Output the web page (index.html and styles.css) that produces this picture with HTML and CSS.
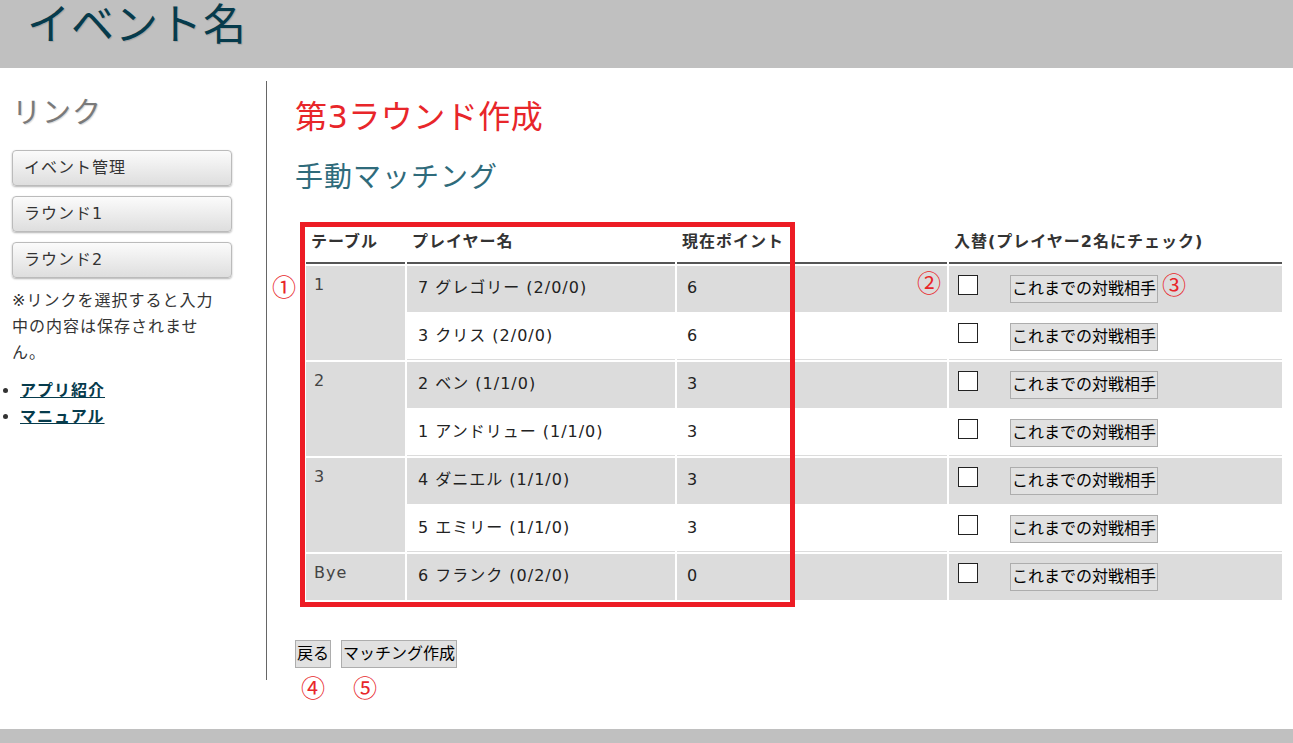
FILE: index.html
```html
<!DOCTYPE html>
<html lang="ja">
<head>
  <meta charset="UTF-8">
  <title>第3ラウンド作成</title>
  <link rel="stylesheet" href="styles.css">
</head>
<body>

  <header class="site-header">
    <h1>イベント名</h1>
  </header>

  <div class="layout">
    <aside class="sidebar">
      <h2>リンク</h2>
      <a class="nav-btn" href="#">イベント管理</a>
      <a class="nav-btn" href="#">ラウンド1</a>
      <a class="nav-btn" href="#">ラウンド2</a>
      <p class="note">※リンクを選択すると入力中の内容は保存されません。</p>
      <ul class="links">
        <li><a href="#">アプリ紹介</a></li>
        <li><a href="#">マニュアル</a></li>
      </ul>
    </aside>

    <main class="main">
      <h2 class="round-title">第3ラウンド作成</h2>
      <h3 class="sub-title">手動マッチング</h3>

      <table class="matching">
        <colgroup>
          <col class="c-table">
          <col class="c-player">
          <col class="c-point">
          <col class="c-swap">
        </colgroup>
        <thead>
          <tr>
            <th>テーブル</th>
            <th>プレイヤー名</th>
            <th>現在ポイント</th>
            <th>入替(プレイヤー2名にチェック)</th>
          </tr>
        </thead>
        <tbody>
          <tr class="odd">
            <td class="tbl" rowspan="2">1</td>
            <td class="player">7 グレゴリー (2/0/0)</td>
            <td>6</td>
            <td class="swap"><div class="swap-box"><input type="checkbox"><button>これまでの対戦相手</button></div></td>
          </tr>
          <tr>
            <td class="player">3 クリス (2/0/0)</td>
            <td>6</td>
            <td class="swap"><div class="swap-box"><input type="checkbox"><button>これまでの対戦相手</button></div></td>
          </tr>
          <tr class="odd">
            <td class="tbl" rowspan="2">2</td>
            <td class="player">2 ベン (1/1/0)</td>
            <td>3</td>
            <td class="swap"><div class="swap-box"><input type="checkbox"><button>これまでの対戦相手</button></div></td>
          </tr>
          <tr>
            <td class="player">1 アンドリュー (1/1/0)</td>
            <td>3</td>
            <td class="swap"><div class="swap-box"><input type="checkbox"><button>これまでの対戦相手</button></div></td>
          </tr>
          <tr class="odd">
            <td class="tbl" rowspan="2">3</td>
            <td class="player">4 ダニエル (1/1/0)</td>
            <td>3</td>
            <td class="swap"><div class="swap-box"><input type="checkbox"><button>これまでの対戦相手</button></div></td>
          </tr>
          <tr>
            <td class="player">5 エミリー (1/1/0)</td>
            <td>3</td>
            <td class="swap"><div class="swap-box"><input type="checkbox"><button>これまでの対戦相手</button></div></td>
          </tr>
          <tr class="odd">
            <td class="tbl">Bye</td>
            <td class="player">6 フランク (0/2/0)</td>
            <td>0</td>
            <td class="swap"><div class="swap-box"><input type="checkbox"><button>これまでの対戦相手</button></div></td>
          </tr>
        </tbody>
      </table>

      <div class="actions">
        <button>戻る</button>
        <button>マッチング作成</button>
      </div>

      <!-- annotations drawn over the screenshot -->
      <div class="mark-box"></div>
      <span class="mark m1">①</span>
      <span class="mark m2">②</span>
      <span class="mark m3">③</span>
      <span class="mark m4">④</span>
      <span class="mark m5">⑤</span>
    </main>
  </div>

  <footer class="site-footer"></footer>

</body>
</html>
```

FILE: styles.css
```css
body {
  margin: 0;
  font-family: "DejaVu Sans", "Noto Sans CJK JP", sans-serif;
  font-size: 16px;
  letter-spacing: 1px;
  color: #333;
  background: #fff;
}

.site-header {
  height: 68px;
  background: #c0c0c0;
  overflow: hidden;
}
.site-header h1 {
  margin: 0;
  padding-left: 27px;
  font-size: 43px;
  line-height: 50px;
  font-weight: normal;
  color: #063b4c;
  text-shadow: 1px 1px 1px rgba(0,0,0,0.15);
}

.layout {
  display: flex;
  margin-top: 13px;
}

.sidebar {
  width: 254px;
  padding-left: 12px;
  border-right: 1px solid #666;
}
.sidebar h2 {
  margin: 14px 0 19px;
  font-size: 29px;
  line-height: 36px;
  font-weight: normal;
  color: #7a7a7a;
  text-shadow: 1px 1px 1px rgba(0,0,0,0.15);
}
.nav-btn {
  display: block;
  box-sizing: border-box;
  width: 220px;
  height: 36px;
  margin-bottom: 10px;
  padding-left: 11px;
  line-height: 34px;
  border: 1px solid #bbb;
  border-radius: 4px;
  background: linear-gradient(#fbfbfb, #dedede);
  box-shadow: 0 1px 2px rgba(0,0,0,0.3);
  color: #333;
  text-decoration: none;
}
.note {
  width: 210px;
  margin: 0;
  line-height: 26px;
}
.links {
  margin: 12px 0 0;
  padding-left: 8px;
  line-height: 26px;
}
.links a {
  font-weight: bold;
  color: #063b4c;
}

.main {
  position: relative;
  flex: 1;
  padding: 0 0 12px 28px;
}
.round-title {
  margin: 16px 0 0;
  font-size: 32px;
  line-height: 40px;
  letter-spacing: 0.5px;
  font-weight: normal;
  color: #e8262a;
}
.sub-title {
  margin: 23px 0 24px;
  font-size: 28px;
  line-height: 36px;
  font-weight: normal;
  color: #2f6b7b;
}

.matching {
  width: 980px;
  margin-left: 9px;
  table-layout: fixed;
  border-spacing: 2px;
}
.c-table { width: 99px; }
.c-player { width: 268px; }
.c-point { width: 270px; }
.c-swap { width: 333px; }

.matching th {
  padding: 9px 5px;
  line-height: 22px;
  text-align: left;
  border-bottom: 2px solid #555;
  color: #333;
}
.matching td {
  padding: 11px 10px 12px;
  line-height: 22px;
  border-bottom: 1px solid #dcdcdc;
  color: #222;
}
.matching tr.odd td,
.matching td.tbl {
  background: #dcdcdc;
}
.matching td.tbl {
  vertical-align: top;
  padding: 8px 8px 15px;
  color: #444;
}
.matching td.player {
  padding-left: 11px;
}
.matching td.swap {
  vertical-align: top;
  padding: 9px 9px 8px;
}
.swap-box {
  display: flex;
  align-items: flex-start;
}
.swap-box input {
  appearance: none;
  -webkit-appearance: none;
  box-sizing: border-box;
  width: 20px;
  height: 20px;
  margin: 0 32px 0 0;
  border: 1px solid #222;
  background: #fff;
}

button {
  box-sizing: border-box;
  height: 28px;
  padding: 0 1px;
  font-family: "DejaVu Sans", "Noto Sans CJK JP", sans-serif;
  font-size: 16px;
  letter-spacing: 0;
  line-height: 26px;
  color: #000;
  background: #e1e1e1;
  border: 1px solid #adadad;
}

.actions {
  margin-top: 38px;
}
.actions button {
  margin-right: 4px;
}

.mark-box {
  position: absolute;
  left: 33px;
  top: 141px;
  width: 495px;
  height: 385px;
  box-sizing: border-box;
  border: 5px solid #ed1c24;
}
.mark {
  position: absolute;
  width: 24px;
  font-family: "Noto Sans CJK JP", sans-serif;
  font-size: 24px;
  line-height: 24px;
  letter-spacing: 0;
  text-align: center;
  color: #e8262a;
}
.m1 { left: 5px; top: 193px; }
.m2 { left: 650px; top: 189px; }
.m3 { left: 895px; top: 191px; }
.m4 { left: 34px; top: 594px; }
.m5 { left: 86px; top: 594px; }

.site-footer {
  height: 40px;
  margin-top: 49px;
  background: #c0c0c0;
}
```
